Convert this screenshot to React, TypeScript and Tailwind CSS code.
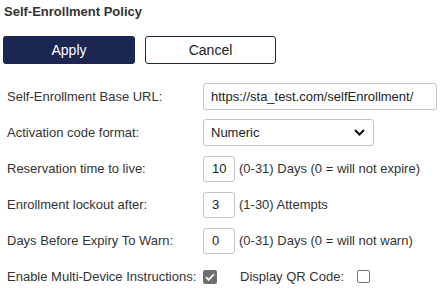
import React, { useState } from 'react';

const rowLabel = "w-[196px] shrink-0 text-[13px] text-[#333]";
const numInput = "w-[32px] h-[26px] rounded-[3px] border border-[#c4c4c4] pl-[8px] pr-0 text-[13px] text-[#222] outline-none";

const App = () => {
  const [url, setUrl] = useState('https://sta_test.com/selfEnrollment/');
  const [format, setFormat] = useState('Numeric');
  const [ttl, setTtl] = useState('10');
  const [lockout, setLockout] = useState('3');
  const [warn, setWarn] = useState('0');
  const [multi, setMulti] = useState(true);
  const [qr, setQr] = useState(false);

  return (
    <div className="w-[447px] h-[291px] bg-white font-['Liberation_Sans',Arial,sans-serif] text-[#333] overflow-hidden">
      {/* HEADER */}
      <h1 className="pl-1 pt-[4px] text-[13px] font-bold leading-4 text-[#333]">Self-Enrollment Policy</h1>

      {/* BUTTONS */}
      <div className="flex gap-[10px] pl-[3px] mt-[16px]">
        <button className="w-[132px] h-[28px] rounded-[3px] bg-[#1b2651] text-white text-[14px]">Apply</button>
        <button className="w-[131px] h-[28px] rounded-[3px] border border-[#1b2651] bg-white text-[#222] text-[14px]">Cancel</button>
      </div>

      {/* FORM ROWS */}
      <div className="flex flex-col gap-[9px] pl-[7px] mt-[19px]">
        <div className="flex items-center h-[27px]">
          <label className={rowLabel}>Self-Enrollment Base URL:</label>
          <input
            value={url}
            onChange={(e) => setUrl(e.target.value)}
            className="w-[234px] h-[27px] rounded-[3px] border border-[#c4c4c4] px-[7px] text-[13px] text-[#222] outline-none"
          />
        </div>

        <div className="flex items-center h-[27px]">
          <label className={rowLabel}>Activation code format:</label>
          <div className="relative w-[171px] h-[27px]">
            <select
              value={format}
              onChange={(e) => setFormat(e.target.value)}
              className="appearance-none w-full h-full rounded-[3px] border border-[#c4c4c4] pl-[7px] text-[13px] text-[#222] bg-white outline-none"
            >
              <option>Numeric</option>
              <option>Alphanumeric</option>
            </select>
            <svg className="absolute right-[9px] top-[10px] pointer-events-none" width="11" height="7" viewBox="0 0 11 7">
              <path d="M1 1l4.5 4.5L10 1" fill="none" stroke="#111" strokeWidth="2" />
            </svg>
          </div>
        </div>

        <div className="flex items-center h-[27px]">
          <label className={rowLabel}>Reservation time to live:</label>
          <input value={ttl} onChange={(e) => setTtl(e.target.value)} className={numInput} />
          <span className="ml-[4px] text-[13px]">(0-31) Days (0 = will not expire)</span>
        </div>

        <div className="flex items-center h-[27px]">
          <label className={rowLabel}>Enrollment lockout after:</label>
          <input value={lockout} onChange={(e) => setLockout(e.target.value)} className={numInput} />
          <span className="ml-[4px] text-[13px]">(1-30) Attempts</span>
        </div>

        <div className="flex items-center h-[27px]">
          <label className={rowLabel}>Days Before Expiry To Warn:</label>
          <input value={warn} onChange={(e) => setWarn(e.target.value)} className={numInput} />
          <span className="ml-[4px] text-[13px]">(0-31) Days (0 = will not warn)</span>
        </div>

        <div className="flex items-center h-[27px]">
          <label className={rowLabel}>Enable Multi-Device Instructions:</label>
          <button
            onClick={() => setMulti(!multi)}
            className={`w-[14px] h-[14px] rounded-[2px] flex items-center justify-center ${multi ? 'bg-[#6f6f6f]' : 'border border-[#767676] bg-white'}`}
          >
            {multi && (
              <svg width="10" height="8" viewBox="0 0 10 8">
                <path d="M1 4.2l2.6 2.6L9 1.2" fill="none" stroke="#fff" strokeWidth="1.8" />
              </svg>
            )}
          </button>
          <span className="ml-[23px] w-[117px] text-[13px]">Display QR Code:</span>
          <button
            onClick={() => setQr(!qr)}
            className={`w-[13px] h-[13px] rounded-[2px] flex items-center justify-center ${qr ? 'bg-[#6f6f6f]' : 'border border-[#767676] bg-white'}`}
          >
            {qr && (
              <svg width="10" height="8" viewBox="0 0 10 8">
                <path d="M1 4.2l2.6 2.6L9 1.2" fill="none" stroke="#fff" strokeWidth="1.8" />
              </svg>
            )}
          </button>
        </div>
      </div>
    </div>
  );
};

export default App;
